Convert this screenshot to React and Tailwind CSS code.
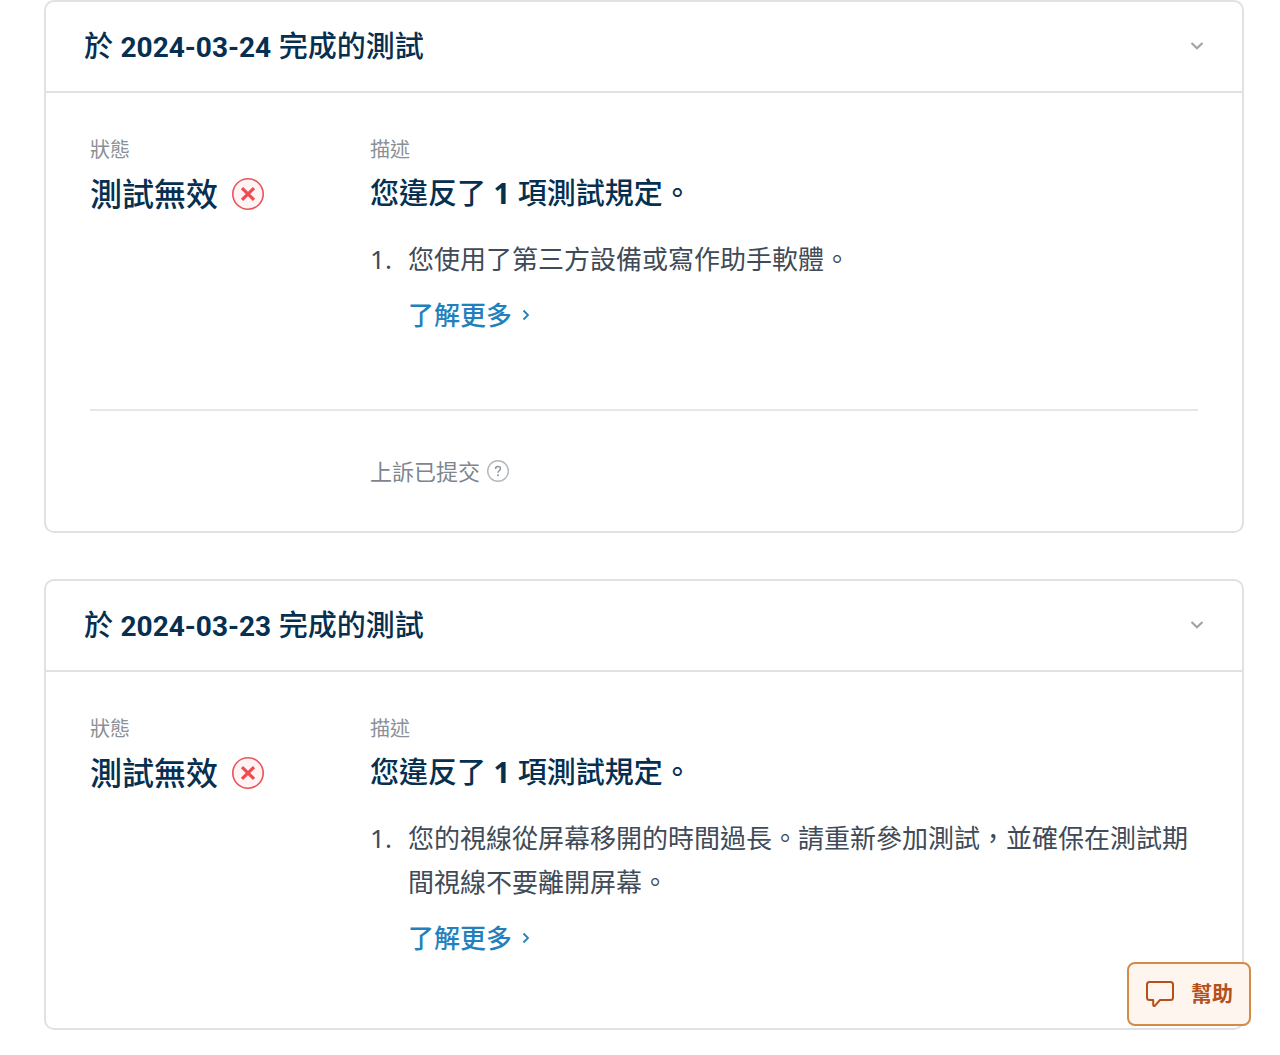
import React, { useState } from 'react';

const results = [
  {
    id: 1,
    date: '2024-03-24',
    status: '測試無效',
    violations: ['您使用了第三方設備或寫作助手軟體。'],
    appeal: '上訴已提交',
  },
  {
    id: 2,
    date: '2024-03-23',
    status: '測試無效',
    violations: ['您的視線從屏幕移開的時間過長。請重新參加測試，並確保在測試期間視線不要離開屏幕。'],
    appeal: null,
  },
];

const ChevronDown = () => (
  <svg viewBox="0 0 14 10" className="w-3.5 h-2.5 shrink-0" fill="none" stroke="#a3a3a3" strokeWidth="2.2" aria-hidden="true">
    <path d="M1.5 2 L7 7.2 L12.5 2" />
  </svg>
);

const ChevronRight = () => (
  <svg viewBox="0 0 8 12" className="w-2 h-3" fill="none" stroke="currentColor" strokeWidth="1.8" aria-hidden="true">
    <path d="M1.5 1.5 L6 6 L1.5 10.5" />
  </svg>
);

const InvalidIcon = () => (
  <svg viewBox="0 0 34 34" className="w-[34px] h-[34px]" fill="none" aria-hidden="true">
    <circle cx="17" cy="17" r="15.2" fill="#fff3f3" stroke="#e4545a" strokeWidth="1.6" />
    <path d="M11 11.2 L23 22.8 M23 11.2 L11 22.8" stroke="#ef4b50" strokeWidth="3.2" />
  </svg>
);

const QuestionIcon = () => (
  <svg viewBox="0 0 24 24" className="w-6 h-6" fill="none" aria-hidden="true">
    <circle cx="12" cy="12" r="10.3" stroke="#b4b8bc" strokeWidth="1.4" />
    <path d="M9.5 9.9 C9.5 8.3 10.5 7.5 12 7.5 C13.5 7.5 14.5 8.4 14.5 9.7 C14.5 11.5 12 11.6 12 13.8" stroke="#9095a0" strokeWidth="1.5" />
    <circle cx="12" cy="16.2" r="1" fill="#9095a0" />
  </svg>
);

const ChatIcon = () => (
  <svg viewBox="0 0 30 28" className="w-[30px] h-7" fill="none" stroke="#b5501b" strokeWidth="2" strokeLinejoin="round" aria-hidden="true">
    <path d="M4.5 2 H25.5 Q28 2 28 4.5 V17.5 Q28 20 25.5 20 H15 L10 25.6 Q8.4 26.8 8.2 25 V20 H4.5 Q2 20 2 17.5 V4.5 Q2 2 4.5 2 Z" />
  </svg>
);

const ResultCard = ({ result }) => {
  const [open, setOpen] = useState(true);

  return (
    <section className="border-2 border-[#e0e1e2] rounded-[10px] bg-white">
      <h2>
        <button
          type="button"
          aria-expanded={open}
          onClick={() => setOpen(!open)}
          className="w-full flex items-center justify-between px-[38px] pt-[21px] pb-[23px] text-left text-[29px] leading-[45px] font-medium text-[#062f50]"
        >
          <span>
            於 <span className="font-[Roboto,sans-serif] text-[28px] leading-none font-bold">{result.date}</span> 完成的測試
          </span>
          <ChevronDown />
        </button>
      </h2>

      {open && (
        <div className="border-t-2 border-[#e0e1e2] px-11">
          <div className="flex pt-[43px] pb-[68px]">
            <div className="w-[280px] shrink-0">
              <p className="text-xl leading-7 text-[#8a9097]">狀態</p>
              <div className="flex items-center gap-[13px] mt-[5px]">
                <span className="text-[32px] leading-[50px] font-medium text-[#062f50]">{result.status}</span>
                <InvalidIcon />
              </div>
            </div>
            <div className="flex-1 min-w-0">
              <p className="text-xl leading-7 text-[#8a9097]">描述</p>
              <p className="mt-[5px] text-[29px] leading-[48px] font-medium text-[#062f50]">
                您違反了 <span className="font-bold">{result.violations.length}</span> 項測試規定。
              </p>
              <ol className="mt-5 text-[26px] leading-[44px] text-[#404b57]">
                {result.violations.map((text, i) => (
                  <li key={text} className="flex">
                    <span className="w-[38px] shrink-0">{i + 1}.</span>
                    <div>
                      <p>{text}</p>
                      <a href="#rules" className="mt-3 inline-flex items-center gap-2.5 font-medium text-[#2281bd]">
                        了解更多
                        <ChevronRight />
                      </a>
                    </div>
                  </li>
                ))}
              </ol>
            </div>
          </div>

          {result.appeal && (
            <div className="mt-1 border-t-2 border-[#e6e7e8] pl-[280px] py-[38px]">
              <div className="flex items-center gap-1.5 text-[22px] leading-[44px] text-[#7d858e]">
                {result.appeal}
                <QuestionIcon />
              </div>
            </div>
          )}
        </div>
      )}
    </section>
  );
};

const App = () => {
  return (
    <main
      lang="zh-Hant"
      className="min-h-screen bg-white pl-11 pr-9 pb-[26px] font-['Noto_Sans','Noto_Sans_CJK_TC',sans-serif]"
    >
      <div className="flex flex-col gap-[46px]">
        {results.map((result) => (
          <ResultCard key={result.id} result={result} />
        ))}
      </div>

      <button
        type="button"
        className="fixed right-[29px] bottom-[29px] flex items-center gap-4 rounded-lg border-2 border-[#d58a48] bg-[#fef5ef] h-16 px-4 text-[21px] font-bold text-[#b5501b]"
      >
        <ChatIcon />
        幫助
      </button>
    </main>
  );
};

export default App;
